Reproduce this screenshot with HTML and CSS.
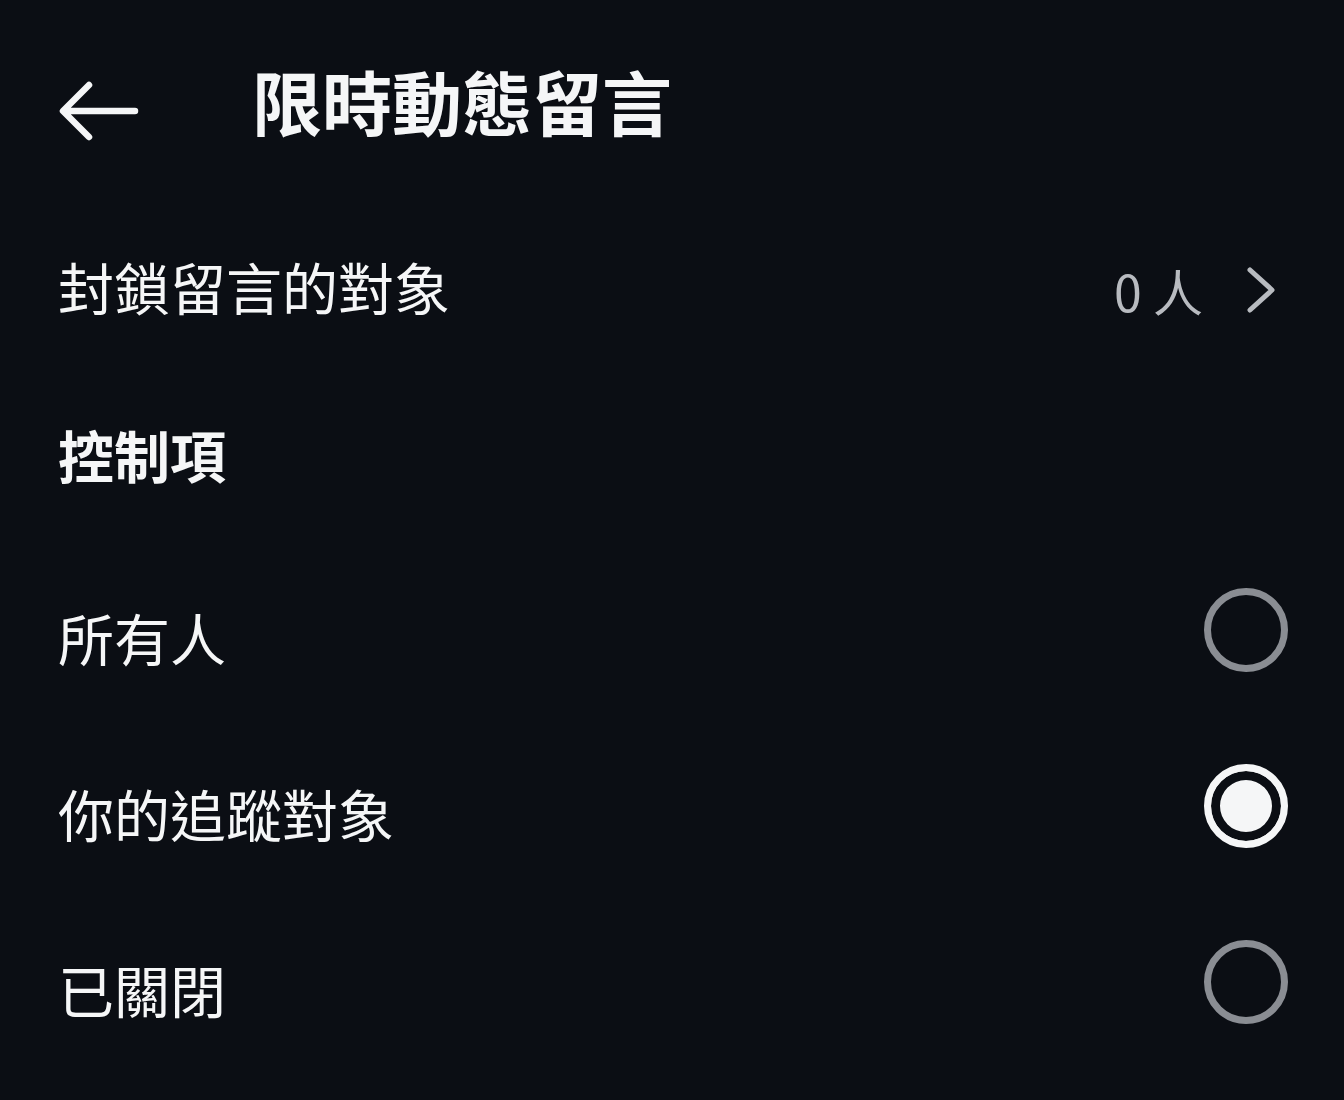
FILE: index.html
```html
<!DOCTYPE html>
<html lang="zh-Hant">
<head>
    <meta charset="UTF-8">
    <meta name="viewport" content="width=device-width, initial-scale=1.0">
    <title>限時動態留言</title>
    <link rel="stylesheet" href="styles.css">
</head>
<body>
    <div class="header">
        <svg class="back-button" width="80" height="60" viewBox="0 0 80 60">
            <path d="M76 30 H6 M30 4 L4 30 L30 56" fill="none" stroke="#f5f6f7" stroke-width="6.5" stroke-linecap="round" stroke-linejoin="round"/>
        </svg>
        <div class="title">限時動態留言</div>
    </div>
    <div class="row">
        <div class="label">封鎖留言的對象</div>
        <div class="value">
            <span>0 人</span>
            <svg class="chevron" width="30" height="46" viewBox="0 0 30 46">
                <path d="M4 3 L26 23 L4 43" fill="none" stroke="#b8bbc0" stroke-width="5" stroke-linecap="round" stroke-linejoin="round"/>
            </svg>
        </div>
    </div>
    <div class="section-title">控制項</div>
    <div class="option">
        <div class="label">所有人</div>
        <div class="radio"></div>
    </div>
    <div class="option">
        <div class="label">你的追蹤對象</div>
        <div class="radio checked"></div>
    </div>
    <div class="option">
        <div class="label">已關閉</div>
        <div class="radio"></div>
    </div>
</body>
</html>
```

FILE: styles.css
```css
body {
    background-color: #0b0e14;
    color: #f5f6f7;
    font-family: "Noto Sans CJK TC", "Noto Sans", sans-serif;
    margin: 0;
    padding: 0 56px 0 58px;
}
.header {
    height: 210px;
    display: flex;
    align-items: center;
}
.back-button {
    margin-left: 1px;
    margin-top: 12px;
}
.title {
    font-size: 70px;
    font-weight: 700;
    line-height: 1;
    margin-left: 113px;
    margin-bottom: 8px;
}
.row {
    height: 160px;
    display: flex;
    align-items: center;
    justify-content: space-between;
}
.label {
    font-size: 56px;
    line-height: 1;
}
.row .label {
    padding-bottom: 8px;
}
.value {
    display: flex;
    align-items: center;
    color: #b8bbc0;
    font-size: 50px;
    line-height: 1;
}
.chevron {
    margin-left: 43px;
    margin-right: 12px;
}
.section-title {
    height: 174px;
    display: flex;
    align-items: center;
    font-size: 56px;
    font-weight: 700;
    line-height: 1;
    padding-bottom: 6px;
    box-sizing: border-box;
}
.option {
    height: 176px;
    display: flex;
    align-items: center;
    justify-content: space-between;
}
.option .label {
    padding-top: 10px;
}
.radio {
    width: 70px;
    height: 70px;
    margin-top: -4px;
    border: 7px solid #8a8d93;
    border-radius: 50%;
    box-sizing: content-box;
}
.radio.checked {
    border-color: #f5f6f7;
    background-color: #f5f6f7;
    box-shadow: inset 0 0 0 9px #0b0e14;
}
```
